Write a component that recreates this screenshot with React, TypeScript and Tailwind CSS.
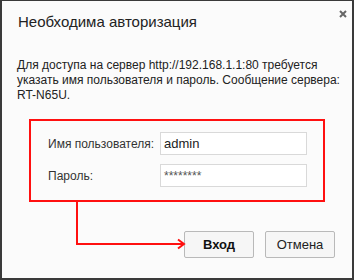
import React from "react";

export default function App() {
  return (
    <div
      className="relative w-[354px] h-[280px] bg-[#fbfbfb] border-x-2 border-b-2 border-t border-[#3a3a3a] overflow-hidden"
      style={{ fontFamily: '"Liberation Sans", Arial, sans-serif' }}
    >
      <div className="flex items-start justify-between pl-[16px] pr-[6px] pt-[11px]">
        <h1 className="text-[15px] leading-[20px] text-[#222]">Необходима авторизация</h1>
        <svg width="8" height="8" viewBox="0 0 8 8" className="mt-[-2px] mr-[-1px]">
          <path d="M1 1 L7 7 M7 1 L1 7" stroke="#666" strokeWidth="2" />
        </svg>
      </div>
      <p className="mt-[26px] pl-[15px] text-[12px] leading-[15px] text-[#222] whitespace-nowrap">
        Для доступа на сервер http://192.168.1.1:80 требуется
        <br />
        указать имя пользователя и пароль. Сообщение сервера:
        <br />
        RT-N65U.
      </p>
      <div className="mt-[29px] pl-[46px] flex flex-col gap-[9px]">
        <div className="flex items-center">
          <span className="w-[112px] text-[12px] text-[#333] whitespace-nowrap">Имя пользователя:</span>
          <div className="w-[147px] h-[23px] border border-[#d9d9d9] bg-white flex items-center px-[3px] text-[13px] text-[#222]">
            admin
          </div>
        </div>
        <div className="flex items-center">
          <span className="w-[112px] text-[12px] text-[#333]">Пароль:</span>
          <div className="w-[147px] h-[23px] border border-[#d9d9d9] bg-white flex items-start pt-[2px] px-[3px] text-[12px] text-[#555]">
            ********
          </div>
        </div>
      </div>
      <div className="mt-[44px] pr-[17px] flex justify-end gap-[11px]">
        <button className="w-[70px] h-[27px] border border-[#b9b9b9] rounded-[2px] bg-[#f6f6f6] text-[13px] font-bold text-[#111]">
          Вход
        </button>
        <button className="w-[70px] h-[27px] border border-[#b9b9b9] rounded-[2px] bg-[#f6f6f6] text-[13px] text-[#222]">
          Отмена
        </button>
      </div>

      <div className="absolute left-[27px] top-[118px] w-[296px] h-[83px] border-[2px] border-[#ff1010]" />
      <svg className="absolute left-0 top-0" width="354" height="280" viewBox="0 0 354 280" fill="none">
        <path d="M75 200 V243 H181" stroke="#ff1010" strokeWidth="2" />
        <path d="M176 238.5 L182 243 L176 247.5" stroke="#ff1010" strokeWidth="2" />
      </svg>
    </div>
  );
}
